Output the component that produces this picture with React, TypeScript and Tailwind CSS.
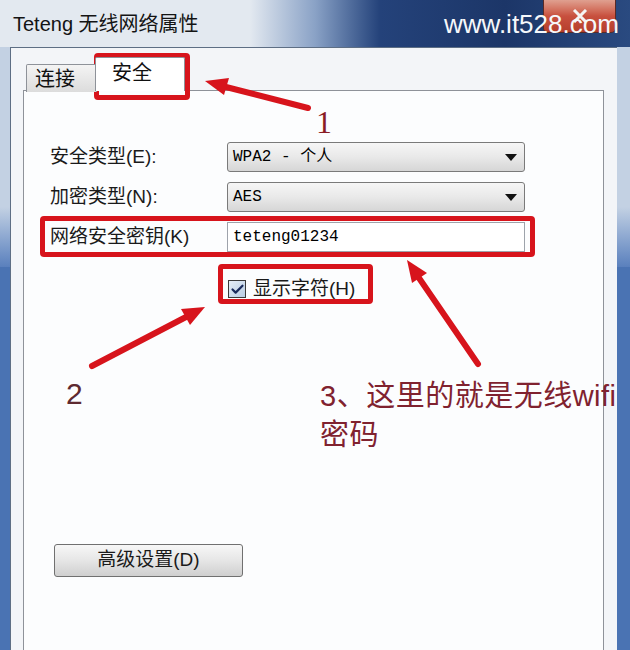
import { Check } from 'lucide-react';

const cjk = '"Liberation Sans", "Noto Sans CJK SC", sans-serif';
const mono = '"Liberation Mono", "Noto Sans CJK SC", monospace';

// every layer of the picture shares the one grid cell of the page
const layer = 'col-start-1 row-start-1 self-start justify-self-start';

function Combo({ value }: { value: string }) {
  return (
    <div className="h-[30px] flex items-center justify-between pl-[5px] pr-[7px] rounded-[3px] border border-[#7a7a7a] bg-linear-to-b from-[#f6f6f6] via-[#e9e9e9] to-[#d6d6d6]">
      <span className="text-[16px] text-black" style={{ fontFamily: mono }}>
        {value}
      </span>
      <svg width="12" height="7" viewBox="0 0 12 7">
        <path d="M0 0 H12 L6 7 Z" fill="#111" />
      </svg>
    </div>
  );
}

function FrameSide({ w }: { w: string }) {
  return (
    <div className={`${w} flex flex-col`}>
      <div className="h-[160px] bg-[#c3d1e3]" />
      <div className="h-[60px] bg-linear-to-b from-[#c3d1e3] to-[#5a80bd]" />
      <div className="flex-1 bg-[#4a73b3]" />
    </div>
  );
}

// red annotation arrow, drawn in page coordinates
function Arrow({ className, box, d, head }: { className: string; box: string; d: string; head: string }) {
  const [, , w, h] = box.split(' ').map(Number);
  return (
    <svg className={`${layer} ${className}`} width={w} height={h} viewBox={box}>
      <path d={d} stroke="#d7141c" strokeWidth="6" strokeLinecap="round" fill="none" />
      <polygon points={head} fill="#d7141c" />
    </svg>
  );
}

export default function App() {
  return (
    <div className="grid grid-cols-[630px] grid-rows-[650px] w-[630px] h-[650px] bg-[#4a73b3]" style={{ fontFamily: cjk }}>
      {/* dialog */}
      <div className="col-start-1 row-start-1 flex flex-col">
        <div className="h-[47px] shrink-0 flex">
          <div className="h-full w-[250px] shrink-0 flex items-center pl-[13px] bg-[#e3e9f0]">
            <span className="text-[20px] text-[#141414] leading-none whitespace-nowrap">Teteng 无线网络属性</span>
          </div>
          <div className="h-full flex-1 bg-linear-to-r from-[#e3e9f0] via-[#8aa2c6] to-[#24427a]" />
          <div className="h-full w-[250px] shrink-0 grid grid-cols-[250px] grid-rows-[47px] bg-linear-to-r from-[#24427a] via-[#1c3668] to-[#2a4a80]">
            <div className={`${layer} ml-[163px] w-[73px] h-[33px] rounded-b-[5px] border border-t-0 border-[#5a2a25] bg-linear-to-b from-[#dfa090] via-[#c8503e] to-[#b53e2c] flex items-center justify-center`}>
              <svg width="16" height="14" viewBox="0 0 16 14">
                <path d="M2 1 L14 13 M14 1 L2 13" stroke="#f4f4f4" strokeWidth="3" />
              </svg>
            </div>
            <div
              className={`${layer} ml-[64px] mt-[11px] text-[26px] leading-[26px] text-[#f6f8fb] whitespace-nowrap`}
              style={{ fontFamily: '"Liberation Sans", sans-serif' }}
            >
              www.it528.com
            </div>
          </div>
        </div>

        <div className="flex-1 flex">
          <FrameSide w="w-[10px]" />
          <div className="flex-1 flex flex-col bg-[#f3f5f8] border-l border-t border-[#5d6e84] pl-[12px] pr-[13px] pt-[9px]">
            {/* tabs */}
            <div className="h-[34px] flex items-end pl-[3px] -mb-px relative z-10">
              <div className="h-[28px] w-[71px] flex items-center pl-[8px] border border-b-0 border-[#8e9299] rounded-t-[2px] bg-linear-to-b from-[#f4f4f4] to-[#dcdcdc] text-[20px] text-[#111] -mb-px">
                连接
              </div>
              <div className="h-[34px] w-[90px] -ml-[2px] flex items-center pl-[16px] pb-[3px] border border-b-0 border-[#8e9299] rounded-t-[2px] bg-white text-[20px] text-[#111]">
                安全
              </div>
            </div>
            {/* tab page */}
            <div className="flex-1 bg-[#fcfdfe] border border-b-0 border-[#8e9299] pt-[51px]">
              <div className="grid grid-cols-[177px_298px] gap-y-[10px] pl-[26px] text-[19px] text-[#1a1a1a]">
                <div className="h-[30px] flex items-center">安全类型(E):</div>
                <Combo value="WPA2 - 个人" />
                <div className="h-[30px] flex items-center">加密类型(N):</div>
                <Combo value="AES" />
                <div className="h-[30px] flex items-center">网络安全密钥(K)</div>
                <div className="h-[30px] flex items-center pl-[5px] border border-[#9ea3ab] bg-white">
                  <span className="text-[16px] text-black" style={{ fontFamily: mono }}>
                    teteng01234
                  </span>
                </div>
              </div>

              <div className="mt-[23px] pl-[204px] flex items-center gap-[7px] text-[19px] text-[#1a1a1a]">
                <div className="w-[18px] h-[18px] border border-[#3a3a3a] bg-linear-to-br from-[#e6eef7] to-[#b9cde4] flex items-center justify-center">
                  <Check size={15} strokeWidth={3.5} color="#1a2b5c" />
                </div>
                <span>显示字符(H)</span>
              </div>

              <div className="mt-[240px] ml-[30px] w-[189px] h-[33px] flex items-center justify-center rounded-[3px] border border-[#707070] bg-linear-to-b from-[#f7f7f7] via-[#e6e6e6] to-[#cfcfcf] text-[19px] text-[#1a1a1a]">
                高级设置(D)
              </div>
            </div>
          </div>
          <FrameSide w="w-[13px]" />
        </div>
      </div>

      {/* red annotation boxes */}
      <div className={`${layer} ml-[94px] mt-[53px] w-[96px] h-[47px] border-[5px] border-[#d7141c] rounded-[4px]`} />
      <div className={`${layer} ml-[40px] mt-[216px] w-[495px] h-[41px] border-[5px] border-[#d7141c] rounded-[4px]`} />
      <div className={`${layer} ml-[218px] mt-[264px] w-[155px] h-[40px] border-[5px] border-[#d7141c] rounded-[4px]`} />

      <Arrow className="ml-[198px] mt-[72px]" box="198 72 116 42" d="M308 108 L226 87" head="205,81 229,78 224,95" />
      <Arrow className="ml-[86px] mt-[300px]" box="86 300 124 72" d="M92 366 L186 317" head="205,307 190,325 181,309" />
      <Arrow className="ml-[402px] mt-[255px]" box="402 255 82 115" d="M478 364 L419 278" head="407,260 427,273 412,283" />

      <div
        className={`${layer} ml-[316px] mt-[106px] text-[32px] leading-none text-[#8a1c24]`}
        style={{ fontFamily: '"Liberation Serif", serif' }}
      >
        1
      </div>
      <div className={`${layer} ml-[66px] mt-[379px] text-[30px] leading-none text-[#5e2a30]`}>2</div>
      <div className={`${layer} ml-[320px] mt-[377px] text-[29px] tracking-[0.5px] leading-[39px] text-[#80222f] whitespace-nowrap`}>
        3、这里的就是无线wifi
        <br />
        密码
      </div>
    </div>
  );
}
